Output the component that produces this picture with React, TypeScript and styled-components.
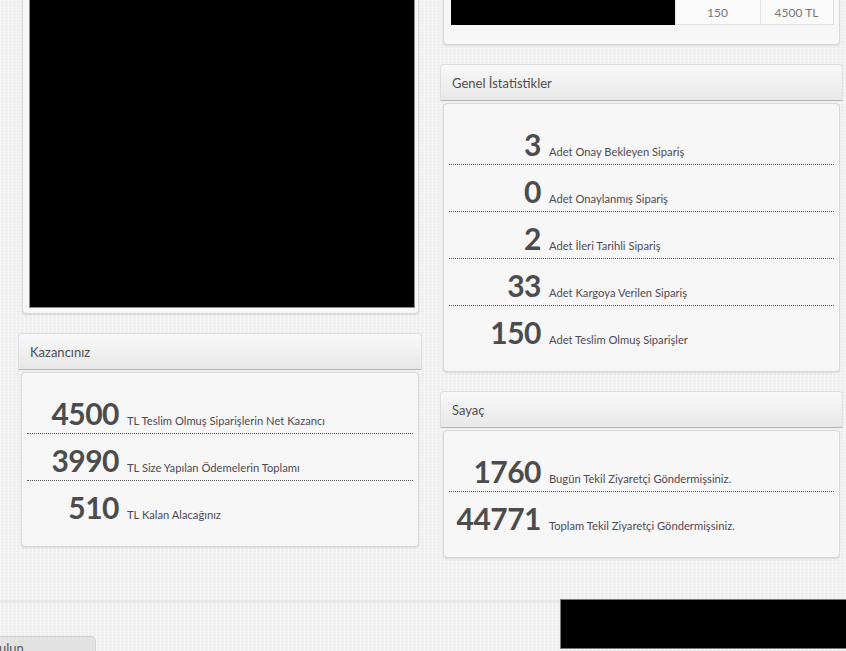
import styled, { createGlobalStyle } from "styled-components";

const GlobalStyle = createGlobalStyle`
  * { box-sizing: border-box; }
  html, body { margin: 0; padding: 0; }
  body {
    background-color: #f1f1f1;
    background-image:
      repeating-linear-gradient(0deg, rgba(0, 0, 0, 0.015) 0 1px, transparent 1px 3px),
      repeating-linear-gradient(90deg, rgba(255, 255, 255, 0.4) 0 1px, transparent 1px 4px);
    font-family: Lato, "Open Sans", sans-serif;
    color: #555;
    overflow: hidden;
  }
`;

interface IStat {
  value: number;
  label: string;
}

const orderStats: IStat[] = [
  { value: 3, label: "Adet Onay Bekleyen Sipariş" },
  { value: 0, label: "Adet Onaylanmış Sipariş" },
  { value: 2, label: "Adet İleri Tarihli Sipariş" },
  { value: 33, label: "Adet Kargoya Verilen Sipariş" },
  { value: 150, label: "Adet Teslim Olmuş Siparişler" },
];

const earnings: IStat[] = [
  { value: 4500, label: "TL Teslim Olmuş Siparişlerin Net Kazancı" },
  { value: 3990, label: "TL Size Yapılan Ödemelerin Toplamı" },
  { value: 510, label: "TL Kalan Alacağınız" },
];

const counter: IStat[] = [
  { value: 1760, label: "Bugün Tekil Ziyaretçi Göndermişsiniz." },
  { value: 44771, label: "Toplam Tekil Ziyaretçi Göndermişsiniz." },
];

const Page = styled.div`
  height: 651px;
  overflow: hidden;
`;

// the page is scrolled a little, so the first panels start above the top edge
const Columns = styled.div`
  display: grid;
  grid-template-columns: 404px 403px;
  column-gap: 18px;
  align-items: start;
  padding-left: 18px;
  margin-top: -20px;
`;

const Column = styled.div`
  display: flex;
  flex-direction: column;
`;

const Widget = styled.section`
  margin-bottom: 19px;
`;

const WidgetHeader = styled.header`
  height: 37px;
  display: flex;
  align-items: center;
  padding: 0 11px;
  border: 1px solid #dedede;
  border-bottom-color: #b4b4b4;
  border-radius: 4px 4px 0 0;
  background: linear-gradient(#f8f8f8, #e8e8e8);
  font-size: 13px;
  color: #4f4f4f;
`;

const WidgetBody = styled.div`
  margin: 2px 3px 0;
  padding: 14px 5px 19px;
  border: 1px solid #d8d8d8;
  border-radius: 4px;
  background: #f7f7f7;
  box-shadow: 0 1px 2px rgba(0, 0, 0, 0.1);
`;

const MediaBody = styled(WidgetBody)`
  height: 334px;
  margin-top: 0;
  margin-left: 4px;
  padding: 5px 3px 5px 6px;
`;

const Player = styled.div`
  height: 100%;
  background: #000;
  border: 1px solid #8a8a8a;
`;

const TableBody = styled(WidgetBody)`
  height: 65px;
  margin-top: 0;
  padding: 18px 6px 0 7px;
`;

const ProductTable = styled.table`
  width: 382px;
  border-collapse: collapse;
  table-layout: fixed;
  font-size: 12px;
  color: #777;
`;

const Cell = styled.td<{ $width: number }>`
  width: ${(p) => p.$width}px;
  height: 25px;
  padding: 0;
  text-align: center;
  border: 1px solid #e2e2e2;
  background: #fafafa;
`;

const Hidden = styled.td`
  width: 224px;
  padding: 0;
  background: #000;
`;

const StatRow = styled.div`
  display: flex;
  align-items: baseline;
  gap: 8px;
  padding: 9px 1px 3px;
  border-bottom: 1px dotted #555;

  &:last-child {
    border-bottom: none;
  }
`;

const StatValue = styled.span`
  width: 91px;
  flex-shrink: 0;
  text-align: right;
  font-size: 30px;
  line-height: 34px;
  font-weight: 700;
  color: #4c4c4c;
  letter-spacing: -0.5px;
`;

const StatLabel = styled.span`
  font-size: 11.2px;
  color: #4f4a55;
`;

const Footer = styled.footer`
  margin-top: 23px;
  border-top: 3px solid #e8e8e8;
  display: flex;
  justify-content: space-between;
  align-items: flex-start;
`;

const FooterTab = styled.div`
  margin-top: 33px;
  width: 96px;
  height: 22px;
  overflow: hidden;
  white-space: nowrap;
  text-indent: -33px;
  padding-top: 3px;
  border: 1px solid #d2d2d2;
  border-left: none;
  border-radius: 0 5px 0 0;
  background: #e2e2e2;
  font-size: 13px;
  color: #555;
`;

const FooterBlock = styled.div`
  margin-top: -4px;
  width: 286px;
  height: 50px;
  background: #000;
  border: 1px solid #7a7a7a;
  border-right: none;
`;

function StatList({ items }: { items: IStat[] }) {
  return (
    <>
      {items.map((item) => (
        <StatRow key={item.label}>
          <StatValue>{item.value}</StatValue>
          <StatLabel>{item.label}</StatLabel>
        </StatRow>
      ))}
    </>
  );
}

function App() {
  return (
    <Page>
      <GlobalStyle />
      <Columns>
        <Column>
          <Widget>
            <MediaBody>
              <Player />
            </MediaBody>
          </Widget>
          <Widget>
            <WidgetHeader>Kazancınız</WidgetHeader>
            <WidgetBody>
              <StatList items={earnings} />
            </WidgetBody>
          </Widget>
        </Column>
        <Column>
          <Widget>
            <TableBody>
              <ProductTable>
                <tbody>
                  <tr>
                    <Hidden />
                    <Cell $width={85}>150</Cell>
                    <Cell $width={73}>4500 TL</Cell>
                  </tr>
                </tbody>
              </ProductTable>
            </TableBody>
          </Widget>
          <Widget>
            <WidgetHeader>Genel İstatistikler</WidgetHeader>
            <WidgetBody>
              <StatList items={orderStats} />
            </WidgetBody>
          </Widget>
          <Widget>
            <WidgetHeader>Sayaç</WidgetHeader>
            <WidgetBody>
              <StatList items={counter} />
            </WidgetBody>
          </Widget>
        </Column>
      </Columns>
      <Footer>
        <FooterTab>Bizi Bulun</FooterTab>
        <FooterBlock />
      </Footer>
    </Page>
  );
}

export default App;
